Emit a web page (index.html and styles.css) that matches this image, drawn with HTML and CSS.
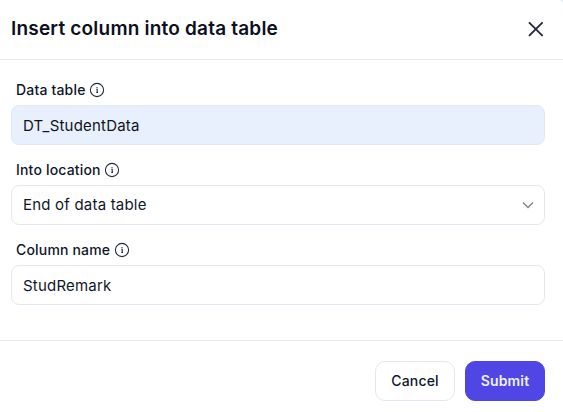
FILE: index.html
```html
<!DOCTYPE html>
<html lang="en">
<head>
<meta charset="utf-8">
<title>Insert column into data table</title>
<link rel="stylesheet" href="styles.css">
</head>
<body>
<form class="dialog">
  <header class="header">
    <h1 class="title">Insert column into data table</h1>
    <svg class="close" viewBox="0 0 16 16"><path d="M1.5 1.8l12.6 12.6M14.1 1.8L1.5 14.4"/></svg>
  </header>
  <main class="body">
    <section class="field">
      <div class="label"><span>Data table</span><svg class="info" viewBox="0 0 16 16"><circle cx="8" cy="8" r="6.6"/><path d="M7.4 7.4h.8v3M7.3 10.4h1.7"/><circle class="dot" cx="8" cy="5.6" r=".7"/></svg></div>
      <div class="control filled">DT_StudentData</div>
    </section>
    <section class="field">
      <div class="label"><span>Into location</span><svg class="info" viewBox="0 0 16 16"><circle cx="8" cy="8" r="6.6"/><path d="M7.4 7.4h.8v3M7.3 10.4h1.7"/><circle class="dot" cx="8" cy="5.6" r=".7"/></svg></div>
      <div class="control select"><span>End of data table</span><svg class="chevron" viewBox="0 0 12 8"><path d="M1 1.5l5 5 5-5"/></svg></div>
    </section>
    <section class="field">
      <div class="label"><span>Column name</span><svg class="info" viewBox="0 0 16 16"><circle cx="8" cy="8" r="6.6"/><path d="M7.4 7.4h.8v3M7.3 10.4h1.7"/><circle class="dot" cx="8" cy="5.6" r=".7"/></svg></div>
      <div class="control">StudRemark</div>
    </section>
  </main>
  <footer class="footer">
    <button type="button" class="button">Cancel</button>
    <button type="button" class="button primary">Submit</button>
  </footer>
</form>
</body>
</html>
```
FILE: styles.css
```css
* { box-sizing: border-box; }
body { margin: 0; background: #dfe3ed; color: #0f172a; font-family: Inter, sans-serif; }
.dialog { height: 412px; display: flex; flex-direction: column; background: #fff; border-top-right-radius: 4px; }
.header { height: 60px; padding: 0 19px 2px 11px; display: flex; align-items: center; justify-content: space-between; border-bottom: 1px solid #e2e8f0; }
.title { margin: 0; color: #0b1022; font-size: 19px; line-height: 28px; font-weight: 600; letter-spacing: .2px; }
.close { width: 16px; height: 16px; margin-top: 1px; fill: none; stroke: #252b3c; stroke-width: 1.9; stroke-linecap: round; }
.body { height: 280px; padding: 20px 18px 0 11px; }
.field { height: 80px; }
.label { height: 25px; padding: 0 5px 5px; display: flex; align-items: center; gap: 3.5px; font-size: 14px; font-weight: 500; letter-spacing: .18px; }
.label span { line-height: 17px; padding-bottom: 2px; }
.info { width: 16px; height: 16px; fill: none; stroke: #252b3c; stroke-width: 1.1; }
.dot { fill: #252b3c; stroke: none; }
.control { height: 40px; padding: 0 11px; border: 1px solid #e2e8f0; border-radius: 8px; display: flex; align-items: center; justify-content: space-between; font-size: 15px; letter-spacing: .2px; }
.select { padding: 0 10px 1px 11px; }
.filled { background: #e8f0fe; color: #111318; }
.chevron { width: 12px; height: 8px; fill: none; stroke: #7b808b; stroke-width: 1.3; }
.footer { flex: 1; border-top: 1px solid #e2e8f0; padding: 20px 18px 0; display: flex; justify-content: flex-end; gap: 10px; }
.button { height: 40px; width: 80px; padding: 0 0 2px; border: 1px solid #e2e8f0; border-radius: 10px; background: #fff; color: #0f172a; font: 500 14px Inter, sans-serif; letter-spacing: .15px; }
.primary { background: #4f46e5; border-color: #4f46e5; color: #eef0ff; font-weight: 600; }
```
